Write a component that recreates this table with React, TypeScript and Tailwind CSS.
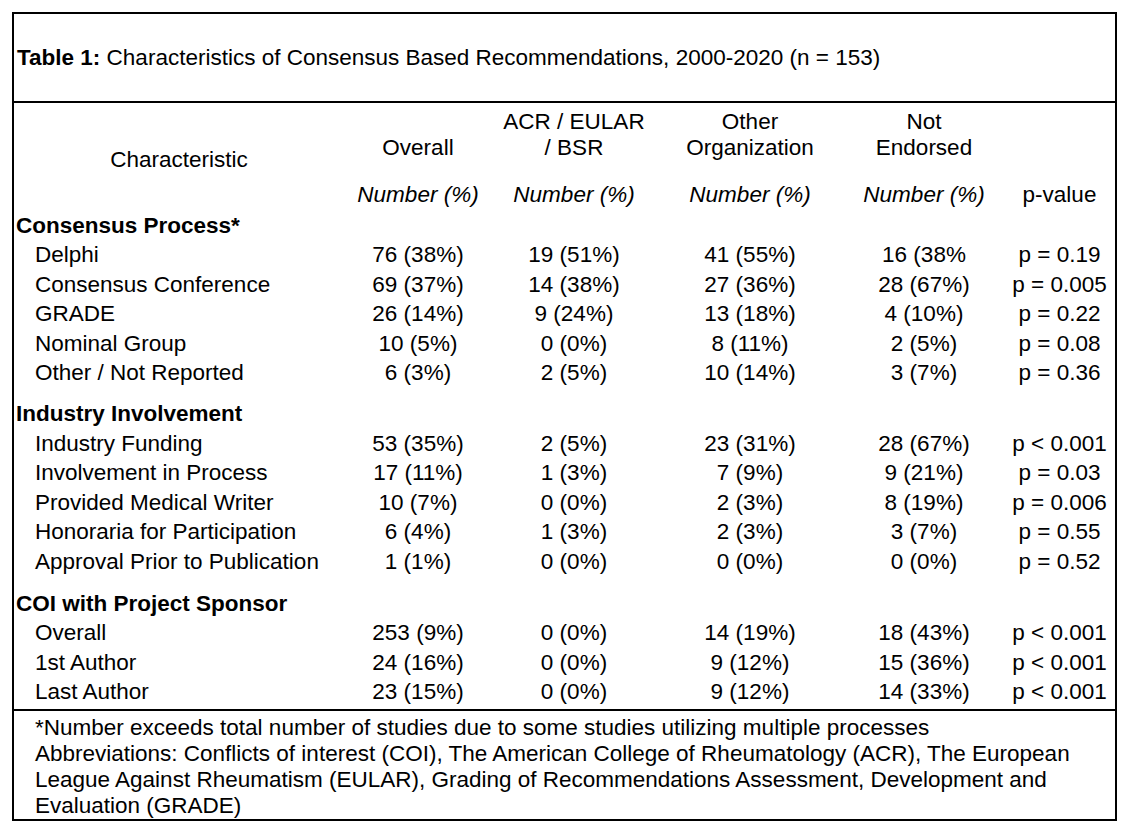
const rowsProcess = [
  ['Delphi', '76 (38%)', '19 (51%)', '41 (55%)', '16 (38%', 'p = 0.19'],
  ['Consensus Conference', '69 (37%)', '14 (38%)', '27 (36%)', '28 (67%)', 'p = 0.005'],
  ['GRADE', '26 (14%)', '9 (24%)', '13 (18%)', '4 (10%)', 'p = 0.22'],
  ['Nominal Group', '10 (5%)', '0 (0%)', '8 (11%)', '2 (5%)', 'p = 0.08'],
  ['Other / Not Reported', '6 (3%)', '2 (5%)', '10 (14%)', '3 (7%)', 'p = 0.36'],
];

const rowsIndustry = [
  ['Industry Funding', '53 (35%)', '2 (5%)', '23 (31%)', '28 (67%)', 'p < 0.001'],
  ['Involvement in Process', '17 (11%)', '1 (3%)', '7 (9%)', '9 (21%)', 'p = 0.03'],
  ['Provided Medical Writer', '10 (7%)', '0 (0%)', '2 (3%)', '8 (19%)', 'p = 0.006'],
  ['Honoraria for Participation', '6 (4%)', '1 (3%)', '2 (3%)', '3 (7%)', 'p = 0.55'],
  ['Approval Prior to Publication', '1 (1%)', '0 (0%)', '0 (0%)', '0 (0%)', 'p = 0.52'],
];

const rowsCoi = [
  ['Overall', '253 (9%)', '0 (0%)', '14 (19%)', '18 (43%)', 'p < 0.001'],
  ['1st Author', '24 (16%)', '0 (0%)', '9 (12%)', '15 (36%)', 'p < 0.001'],
  ['Last Author', '23 (15%)', '0 (0%)', '9 (12%)', '14 (33%)', 'p < 0.001'],
];

const cols = 'grid grid-cols-[330px_148px_164px_188px_160px_111px]';

const GroupHeader = ({ label, className = '' }: { label: string; className?: string }) => (
  <div className={`${cols} h-[29.6px] leading-[29.6px] ${className}`}>
    <div className="pl-[2px] font-bold whitespace-nowrap">{label}</div>
  </div>
);

const DataRow = ({ row }: { row: string[] }) => (
  <div className={`${cols} h-[29.6px] leading-[29.6px]`}>
    <div className="pl-[21px] whitespace-nowrap">{row[0]}</div>
    {row.slice(1).map((cell, i) => (
      <div key={i} className="text-center whitespace-nowrap">
        {cell}
      </div>
    ))}
  </div>
);

export default function App() {
  return (
    <div
      className="min-h-screen bg-white pt-[12px] pl-[12px] text-black text-[22.5px]"
      style={{ fontFamily: '"Liberation Sans", Arial, Helvetica, sans-serif' }}
    >
      <div className="w-[1105px] border-2 border-black">
        {/* Title */}
        <div className="h-[89px] flex items-center pl-[3px] border-b-2 border-black whitespace-nowrap">
          <span className="font-bold">Table 1:</span>
          <span>&nbsp;Characteristics of Consensus Based Recommendations, 2000-2020 (n = 153)</span>
        </div>

        {/* Column headers */}
        <div className={`${cols} pt-[5.5px] grid-rows-[52px_31px] gap-y-[19px]`}>
          <div className="row-span-2 self-center text-center leading-[30px]">Characteristic</div>
          <div className="self-end text-center leading-[26px]">Overall</div>
          <div className="self-end text-center leading-[26px] whitespace-nowrap">
            ACR / EULAR
            <br />/ BSR
          </div>
          <div className="self-end text-center leading-[26px]">
            Other
            <br />
            Organization
          </div>
          <div className="self-end text-center leading-[26px]">
            Not
            <br />
            Endorsed
          </div>
          <div />
          <div className="text-center italic leading-[30px] whitespace-nowrap">Number (%)</div>
          <div className="text-center italic leading-[30px] whitespace-nowrap">Number (%)</div>
          <div className="text-center italic leading-[30px] whitespace-nowrap">Number (%)</div>
          <div className="text-center italic leading-[30px] whitespace-nowrap">Number (%)</div>
          <div className="text-center leading-[30px]">p-value</div>
        </div>

        {/* Body */}
        <div className="pb-[2px] border-b-2 border-black">
          <GroupHeader label="Consensus Process*" />
          {rowsProcess.map((r) => (
            <DataRow key={r[0]} row={r} />
          ))}
          <GroupHeader label="Industry Involvement" className="mt-[11px]" />
          {rowsIndustry.map((r) => (
            <DataRow key={r[0]} row={r} />
          ))}
          <GroupHeader label="COI with Project Sponsor" className="mt-[12px]" />
          {rowsCoi.map((r) => (
            <DataRow key={r[0]} row={r} />
          ))}
        </div>

        {/* Footnotes */}
        <div className="pt-[3.5px] pl-[21px] leading-[26px] whitespace-nowrap">
          <div>*Number exceeds total number of studies due to some studies utilizing multiple processes</div>
          <div>
            Abbreviations: Conflicts of interest (COI), The American College of Rheumatology (ACR), The European
          </div>
          <div>League Against Rheumatism (EULAR), Grading of Recommendations Assessment, Development and</div>
          <div>Evaluation (GRADE)</div>
        </div>
      </div>
    </div>
  );
}
